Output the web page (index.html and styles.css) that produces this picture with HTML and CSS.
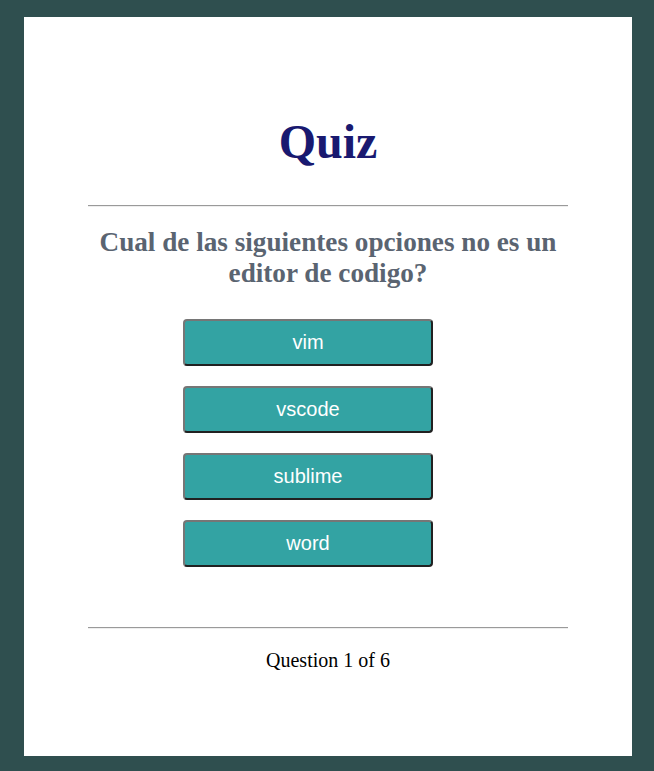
FILE: index.html
```html
<!DOCTYPE html>
<html lang="es">
<head>
<meta charset="utf-8">
<title>Quiz</title>
<link rel="stylesheet" href="styles.css">
</head>
<body>
<main class="card">
  <h1 class="title">Quiz</h1>
  <hr class="rule">
  <h2 class="question">Cual de las siguientes opciones no es un editor de codigo?</h2>
  <div class="options">
    <button class="option">vim</button>
    <button class="option">vscode</button>
    <button class="option">sublime</button>
    <button class="option">word</button>
  </div>
  <hr class="rule">
  <p class="progress">Question 1 of 6</p>
</main>
</body>
</html>
```
FILE: styles.css
```css
html, body {
  margin: 0;
  padding: 0;
}
body {
  background: #2f4f4f;
  font-family: "Liberation Serif", serif;
  padding: 17px 22px 15px 24px;
}
.card {
  background: #ffffff;
  height: 739px;
  box-sizing: border-box;
  padding: 98px 64px 0 64px;
  text-align: center;
}
.title {
  margin: 0;
  font-size: 48px;
  line-height: 53px;
  color: #191970;
  font-weight: bold;
}
.rule {
  margin: 37px 0 0 0;
  border: 0;
  border-top: 1px solid #9a9a9a;
  border-bottom: 1px solid #eeeeee;
  height: 0;
}
.question {
  margin: 20px 0 0 0;
  font-size: 27.2px;
  line-height: 31px;
  color: #5a6471;
  font-weight: bold;
}
.options {
  display: flex;
  flex-direction: column;
  align-items: flex-start;
  gap: 20px;
  padding-left: 95px;
  margin-top: 30px;
  margin-bottom: 60px;
}
.option {
  width: 250px;
  height: 47px;
  background: #33a3a3;
  color: #ffffff;
  font-family: "Liberation Sans", Arial, sans-serif;
  font-size: 20px;
  border: 2px outset #767676;
  border-radius: 4px;
  padding: 0;
}
.options + .rule {
  margin-top: 0;
}
.progress {
  margin: 20px 0 0 0;
  font-size: 20px;
  line-height: 23px;
  color: #000000;
}
```
